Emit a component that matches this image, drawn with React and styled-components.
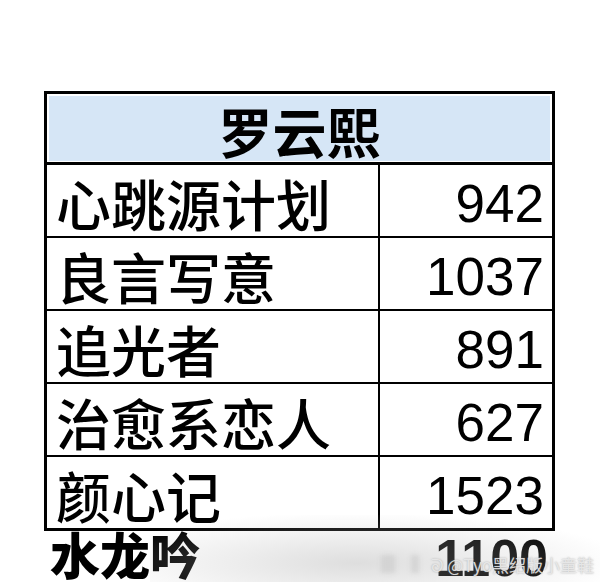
import styled, { createGlobalStyle } from 'styled-components';

const GlobalStyle = createGlobalStyle`
  html, body {
    margin: 0;
    padding: 0;
    background: #fff;
  }
`;

const rows = [
  { title: '心跳源计划', count: 942 },
  { title: '良言写意', count: 1037 },
  { title: '追光者', count: 891 },
  { title: '治愈系恋人', count: 627 },
  { title: '颜心记', count: 1523 },
];

function App() {
  return (
    <Page>
      <GlobalStyle />
      <Table>
        <Header>
          <HeaderFill>罗云熙</HeaderFill>
        </Header>
        {rows.map((row, i) => (
          <Row key={row.title} last={i === rows.length - 1}>
            <Title>{row.title}</Title>
            <Count>{row.count}</Count>
          </Row>
        ))}
      </Table>
      <Extra>
        <ExtraTitle>水龙吟</ExtraTitle>
        <ExtraCount>1100</ExtraCount>
      </Extra>
      <Shade />
      <Watermark>
        <Blur />
        <Blur small />
        <WeiboMark>ᘐ</WeiboMark>
        @Tyo黑绍版小童鞋
      </Watermark>
    </Page>
  );
}

export default App;

const Page = styled.div`
  position: relative;
  width: 600px;
  height: 582px;
  overflow: hidden;
  padding: 91px 0 0 44px;
  box-sizing: border-box;
  background: #fff;
`;

const Table = styled.div`
  width: 511px;
  border: 3px solid #000;
  box-sizing: border-box;
`;

const Header = styled.div`
  height: 71px;
  padding: 2px 2px 1px;
  box-sizing: border-box;
  border-bottom: 3px solid #000;
  background: #fff;
`;

const HeaderFill = styled.div`
  height: 100%;
  background: #d6e6f6;
  display: flex;
  justify-content: center;
  align-items: center;
  padding-top: 4px;
  box-sizing: border-box;
  font-family: 'Noto Sans CJK SC', sans-serif;
  font-weight: 700;
  font-size: 54px;
  line-height: 1;
  color: #000;
`;

const Row = styled.div`
  display: grid;
  grid-template-columns: 333px 1fr;
  height: ${(p) => (p.last ? '71px' : '73px')};
  border-bottom: ${(p) => (p.last ? 'none' : '2px solid #000')};
  box-sizing: border-box;
`;

const Title = styled.div`
  display: flex;
  align-items: center;
  padding: 3px 0 0 9px;
  box-sizing: border-box;
  border-right: 2px solid #000;
  font-family: 'Noto Sans CJK SC', sans-serif;
  font-weight: 500;
  font-size: 55px;
  line-height: 1;
  color: #000;
  white-space: nowrap;
`;

const Count = styled.div`
  display: flex;
  align-items: center;
  justify-content: flex-end;
  padding: 6px 8px 0 0;
  box-sizing: border-box;
  font-family: 'Liberation Sans', Arial, sans-serif;
  font-size: 53px;
  line-height: 1;
  color: #000;
`;

const Extra = styled.div`
  width: 511px;
  display: flex;
  justify-content: space-between;
  align-items: flex-start;
  padding: 0 7px 0 6px;
  box-sizing: border-box;
  color: #000;
`;

const ExtraTitle = styled.div`
  font-family: 'Noto Sans CJK SC', sans-serif;
  font-weight: 900;
  font-size: 50px;
  line-height: 1;
  margin-top: -3px;
`;

const ExtraCount = styled.div`
  font-family: 'Liberation Sans', Arial, sans-serif;
  font-weight: 700;
  font-size: 52px;
  line-height: 1;
  margin-top: 1px;
`;

const Shade = styled.div`
  position: absolute;
  left: 150px;
  top: 515px;
  width: 460px;
  height: 80px;
  background: radial-gradient(
    ellipse at 45% 60%,
    rgba(160, 160, 160, 0.35) 0%,
    rgba(190, 190, 190, 0.2) 45%,
    rgba(255, 255, 255, 0) 75%
  );
  pointer-events: none;
`;

const Watermark = styled.div`
  position: absolute;
  right: 6px;
  bottom: 9px;
  display: flex;
  align-items: center;
  gap: 2px;
  font-family: 'Noto Sans CJK SC', 'Liberation Sans', sans-serif;
  font-size: 17px;
  line-height: 1;
  color: rgba(235, 235, 235, 0.9);
  text-shadow: 0 0 2px rgba(120, 120, 120, 0.6);
  white-space: nowrap;
`;

const Blur = styled.span`
  display: inline-block;
  width: ${(p) => (p.small ? '8px' : '14px')};
  height: 18px;
  margin-right: ${(p) => (p.small ? '10px' : '14px')};
  background: rgba(200, 200, 200, 0.55);
  filter: blur(2px);
`;

const WeiboMark = styled.span`
  font-size: 18px;
  margin-right: 1px;
`;
